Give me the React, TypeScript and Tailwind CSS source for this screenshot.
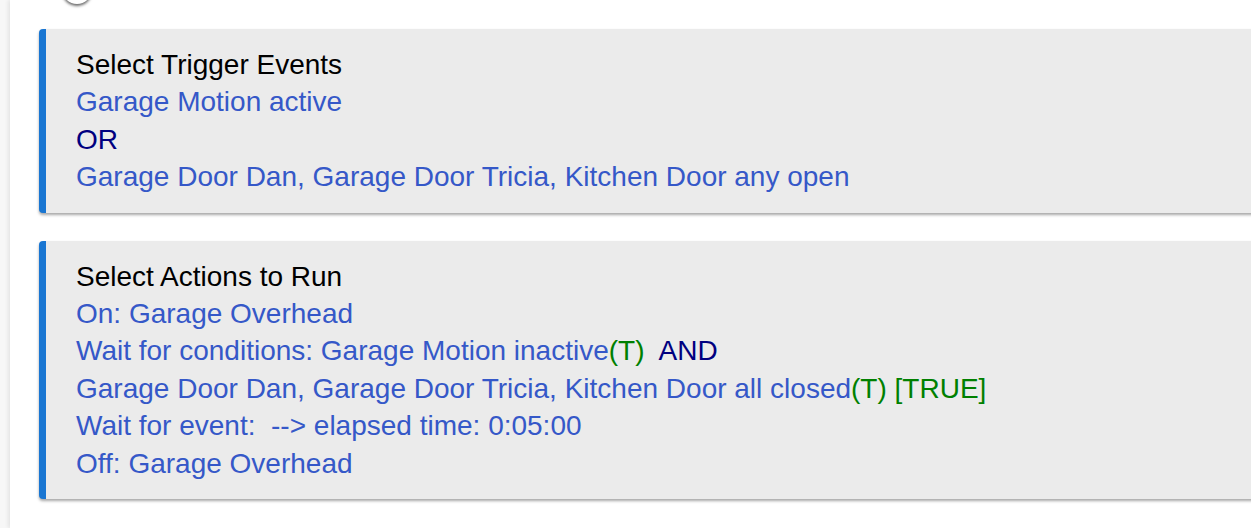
import React from 'react';

const Blue = ({ children }: { children: React.ReactNode }) => (
  <span className="text-[#3558c8]">{children}</span>
);
const Navy = ({ children }: { children: React.ReactNode }) => (
  <span className="text-[#000080]">{children}</span>
);
const Green = ({ children }: { children: React.ReactNode }) => (
  <span className="text-[#008000]">{children}</span>
);

const Section = ({ title, children }: { title: string; children: React.ReactNode }) => (
  <div className="mr-[-40px] rounded-[4px] border-l-[7px] border-[#1976d2] bg-[#ebebeb] pl-[30px] pt-[17px] pb-[17px] shadow-[0_2px_3px_rgba(0,0,0,0.35)]">
    <div className="text-black">{title}</div>
    {children}
  </div>
);

export default function App() {
  return (
    <div
      className="h-[528px] w-full overflow-hidden bg-[#f7f7f7] pl-[10px] text-[28px] leading-[37.4px] whitespace-pre"
      style={{ fontFamily: '"Liberation Sans", Arial, sans-serif' }}
    >
      <div className="relative h-full bg-white pl-[29px] pt-[29px] shadow-[-2px_0_4px_rgba(0,0,0,0.08)]">
        <div className="absolute left-[52px] top-[-26px] h-[30px] w-[30px] rounded-full bg-white shadow-[0_2px_3px_rgba(0,0,0,0.6)]" />
        <div className="flex flex-col gap-[28px]">
          <Section title="Select Trigger Events">
            <div><Blue>Garage Motion active</Blue></div>
            <div><Navy>OR</Navy></div>
            <div><Blue>Garage Door Dan, Garage Door Tricia, Kitchen Door any open</Blue></div>
          </Section>
          <Section title="Select Actions to Run">
            <div><Blue>On: Garage Overhead</Blue></div>
            <div>
              <Blue>Wait for conditions: Garage Motion inactive</Blue>
              <Green>(T)</Green>
              <Navy>{'  AND'}</Navy>
            </div>
            <div>
              <Blue>Garage Door Dan, Garage Door Tricia, Kitchen Door all closed</Blue>
              <Green>(T) [TRUE]</Green>
            </div>
            <div><Blue>{'Wait for event:  --> elapsed time: 0:05:00'}</Blue></div>
            <div><Blue>Off: Garage Overhead</Blue></div>
          </Section>
        </div>
      </div>
    </div>
  );
}
